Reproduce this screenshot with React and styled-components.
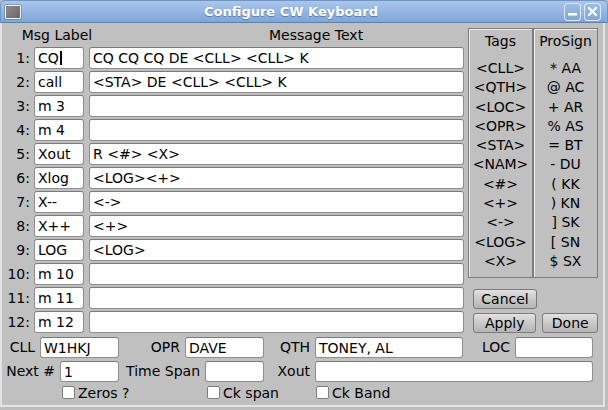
import React from 'react';
import styled, { createGlobalStyle } from 'styled-components';

const GlobalStyle = createGlobalStyle`
  *, *::before, *::after { box-sizing: border-box; }
  html, body { margin: 0; padding: 0; background: #c0c0c0; }
  body { font-family: "DejaVu Sans", "Noto Sans", sans-serif; }
`;

const messages = [
  ['CQ', 'CQ CQ CQ DE <CLL> <CLL> K'],
  ['call', '<STA> DE <CLL> <CLL> K'],
  ['m 3', ''],
  ['m 4', ''],
  ['Xout', 'R <#> <X>'],
  ['Xlog', '<LOG><+>'],
  ['X--', '<->'],
  ['X++', '<+>'],
  ['LOG', '<LOG>'],
  ['m 10', ''],
  ['m 11', ''],
  ['m 12', ''],
];

const tags = ['<CLL>', '<QTH>', '<LOC>', '<OPR>', '<STA>', '<NAM>', '<#>', '<+>', '<->', '<LOG>', '<X>'];
const prosigns = ['* AA', '@ AC', '+ AR', '% AS', '= BT', '- DU', '( KK', ') KN', '] SK', '[ SN', '$ SX'];

const App = () => {
  return (
    <>
      <GlobalStyle />
      <Window>
        <TitleBar>
          <WinIcon />
          <TitleText>Configure CW Keyboard</TitleText>
          <TitleButton>
            <svg width="11" height="11" viewBox="0 0 11 11">
              <rect x="1" y="7" width="9" height="2.5" fill="#fff" />
            </svg>
          </TitleButton>
          <TitleButton>
            <svg width="11" height="11" viewBox="0 0 11 11">
              <path d="M2 2 L9 9 M9 2 L2 9" stroke="#fff" strokeWidth="2.2" strokeLinecap="round" />
            </svg>
          </TitleButton>
        </TitleBar>

        <Frame>
          <Client>
            <Top>
              <LeftCol>
                <Header>
                  <HeadCell $w={110}>Msg Label</HeadCell>
                  <HeadCell $indent={157}>Message Text</HeadCell>
                </Header>
                <RowList>
                  {messages.map(([label, text], i) => (
                    <MsgRow key={i}>
                      <NumLabel>{i + 1}:</NumLabel>
                      <TextBox $w={50}>
                        {label}
                        {i === 0 && <Caret />}
                      </TextBox>
                      <TextBox $w={375} $gap={5}>{text}</TextBox>
                    </MsgRow>
                  ))}
                </RowList>
              </LeftCol>

              <RightCol>
                <Panels>
                  <Panel>
                    <PanelTitle>Tags</PanelTitle>
                    <PanelList>
                      {tags.map((t) => <li key={t}>{t}</li>)}
                    </PanelList>
                  </Panel>
                  <Panel>
                    <PanelTitle>ProSign</PanelTitle>
                    <PanelList>
                      {prosigns.map((p) => <li key={p}>{p}</li>)}
                    </PanelList>
                  </Panel>
                </Panels>
                <ButtonRow $top={11}>
                  <Button $w={64}>Cancel</Button>
                </ButtonRow>
                <ButtonRow $top={4}>
                  <Button $w={64}>Apply</Button>
                  <Button $w={56} $gap={6}>Done</Button>
                </ButtonRow>
              </RightCol>
            </Top>

            <Bottom>
              <FieldRow>
                <Field $lw={38} $iw={79} label="CLL" value="W1HKJ" />
                <Field $lw={66} $iw={79} label="OPR" value="DAVE" />
                <Field $lw={51} $iw={148} label="QTH" value="TONEY, AL" />
                <Field $lw={52} $iw={78} label="LOC" value="" />
              </FieldRow>
              <FieldRow>
                <Field $lw={58} $iw={59} label="Next #" value="1" />
                <Field $lw={86} $iw={59} label="Time Span" value="" />
                <Field $lw={51} $iw={278} label="Xout" value="" />
              </FieldRow>
              <CheckRow>
                <CheckItem $at={60} $w={145}><CheckBox />Zeros ?</CheckItem>
                <CheckItem $w={109}><CheckBox />Ck span</CheckItem>
                <CheckItem><CheckBox />Ck Band</CheckItem>
              </CheckRow>
            </Bottom>
          </Client>
        </Frame>
      </Window>
    </>
  );
};

const Field = ({ label, value, $lw, $iw }) => (
  <FieldWrap>
    <FieldLabel $w={$lw}>{label}</FieldLabel>
    <TextBox $w={$iw}>{value}</TextBox>
  </FieldWrap>
);

export default App;

const Window = styled.div`
  width: 608px;
  height: 410px;
  display: flex;
  flex-direction: column;
  background: #bcbcbc;
  overflow: hidden;
  font-family: "DejaVu Sans", "Noto Sans", sans-serif;
  font-size: 14px;
  color: #000;
`;

const TitleBar = styled.div`
  height: 23px;
  flex: none;
  display: flex;
  align-items: center;
  padding: 0 6px 0 4px;
  background: linear-gradient(#a9c6ec, #7fa6d9);
  border-radius: 5px 5px 0 0;
  border: 1px solid #6f94c6;
  border-bottom-color: #5b80b2;
`;

const WinIcon = styled.div`
  width: 16px;
  height: 14px;
  border: 1px solid #f2f2f2;
  border-radius: 1px;
  background: linear-gradient(135deg, #8f8f8f, #666);
  box-shadow: 0 0 0 1px rgba(80, 100, 130, 0.4);
`;

const TitleText = styled.div`
  flex: 1;
  text-align: center;
  color: #fff;
  font-weight: bold;
  font-size: 13px;
  text-shadow: 0 1px 1px rgba(40, 70, 110, 0.5);
`;

const TitleButton = styled.div`
  width: 17px;
  height: 18px;
  margin-left: 3px;
  display: flex;
  align-items: center;
  justify-content: center;
  border-radius: 4px;
  border: 1px solid rgba(235, 242, 252, 0.85);
  background: linear-gradient(#9dbde6, #80a7d9);
`;

const Frame = styled.div`
  flex: 1;
  display: flex;
  padding: 0 3px 3px 0;
`;

const Client = styled.div`
  flex: 1;
  display: flex;
  flex-direction: column;
  background: #c0c0c0;
  border: 2px solid #e3e3e3;
  border-top: none;
`;

const Top = styled.div`
  height: 310px;
  display: flex;
`;

const LeftCol = styled.div`
  width: 462px;
  display: flex;
  flex-direction: column;
`;

const Header = styled.div`
  height: 24px;
  display: flex;
  align-items: center;
`;

const HeadCell = styled.div`
  width: ${({ $w }) => ($w ? `${$w}px` : 'auto')};
  padding-left: ${({ $indent }) => $indent || 0}px;
  text-align: ${({ $w }) => ($w ? 'center' : 'left')};
`;

const RowList = styled.div`
  display: flex;
  flex-direction: column;
  gap: 2px;
`;

const MsgRow = styled.div`
  height: 22px;
  display: flex;
  align-items: stretch;
`;

const NumLabel = styled.div`
  width: 32px;
  padding-right: 4px;
  text-align: right;
  line-height: 22px;
`;

const TextBox = styled.div`
  width: ${({ $w }) => $w}px;
  margin-left: ${({ $gap }) => $gap || 0}px;
  height: 100%;
  display: flex;
  align-items: center;
  padding: 0 3px;
  background: #fff;
  border: 1px solid #8e8e8e;
  border-top-color: #7a7a7a;
  border-radius: 3px;
  white-space: pre;
  overflow: hidden;
`;

const Caret = styled.span`
  display: inline-block;
  width: 2px;
  height: 14px;
  margin-left: 1px;
  background: #000;
`;

const RightCol = styled.div`
  margin-left: 4px;
  width: 130px;
  display: flex;
  flex-direction: column;
`;

const Panels = styled.div`
  margin-top: 5px;
  height: 250px;
  display: flex;
`;

const Panel = styled.div`
  width: 65px;
  height: 100%;
  border: 1px solid #7d7d7d;
  box-shadow: inset 1px 1px 0 #ececec;
  text-align: center;
`;

const PanelTitle = styled.div`
  padding-top: 3px;
  line-height: 18px;
`;

const PanelList = styled.ul`
  list-style: none;
  margin: 9px 0 0;
  padding: 0;
  line-height: 19.3px;
  white-space: pre;
`;

const ButtonRow = styled.div`
  margin-top: ${({ $top }) => $top}px;
  padding-left: 5px;
  display: flex;
`;

const Button = styled.div`
  width: ${({ $w }) => $w}px;
  height: 20px;
  margin-left: ${({ $gap }) => $gap || 0}px;
  display: flex;
  align-items: center;
  justify-content: center;
  border: 1px solid #7a7a7a;
  border-radius: 3px;
  background: linear-gradient(#e2e2e2, #c4c4c4 60%, #b6b6b6);
`;

const Bottom = styled.div`
  margin-top: 4px;
  display: flex;
  flex-direction: column;
  gap: 3px;
`;

const FieldRow = styled.div`
  height: 21px;
  display: flex;
`;

const FieldWrap = styled.div`
  display: flex;
  align-items: stretch;
`;

const FieldLabel = styled.div`
  width: ${({ $w }) => $w}px;
  padding-right: 5px;
  text-align: right;
  line-height: 21px;
  white-space: nowrap;
`;

const CheckRow = styled.div`
  margin-top: -3px;
  height: 21px;
  display: flex;
  align-items: center;
`;

const CheckItem = styled.div`
  margin-left: ${({ $at }) => $at || 0}px;
  width: ${({ $w }) => ($w ? `${$w}px` : 'auto')};
  display: flex;
  align-items: center;
  gap: 3px;
  white-space: nowrap;
`;

const CheckBox = styled.span`
  width: 13px;
  height: 13px;
  background: #fff;
  border: 1px solid #7e7e7e;
  border-radius: 2px;
`;
